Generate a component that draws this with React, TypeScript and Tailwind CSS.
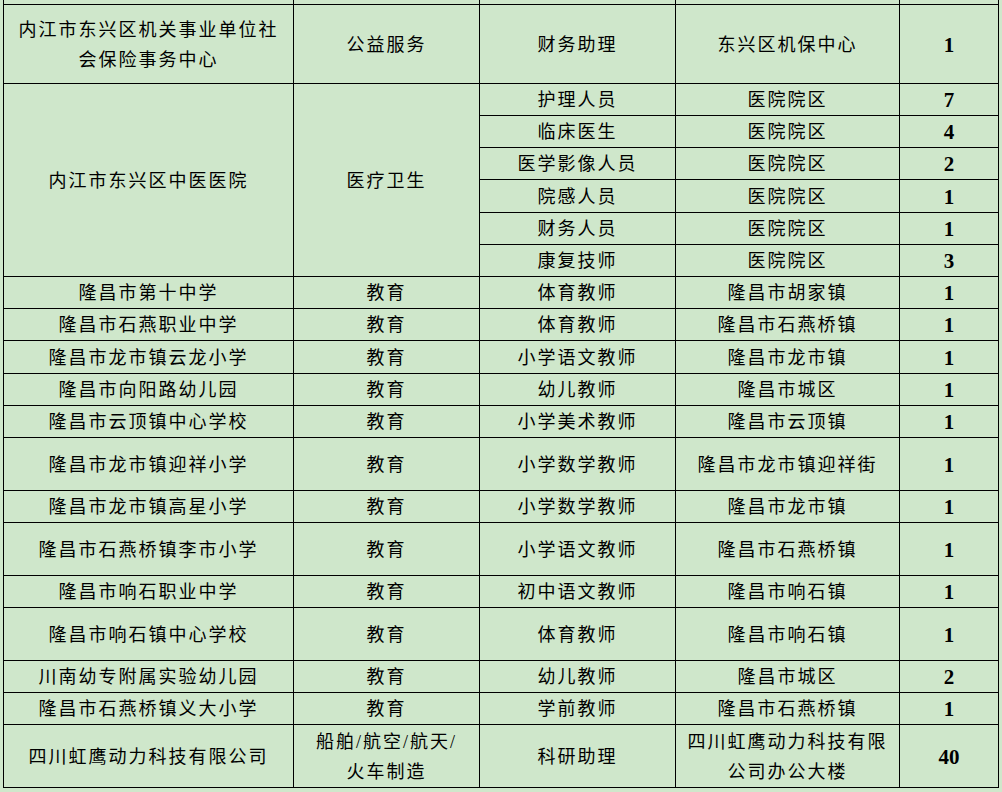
import React from "react";

type Row = {
  h: number;
  unit?: React.ReactNode;
  unitSpan?: number;
  field?: React.ReactNode;
  fieldSpan?: number;
  job: React.ReactNode;
  place: React.ReactNode;
  num: string;
};

const TwoLines = ({ a, b }: { a: string; b: string }) => (
  <span className="block leading-[30px]">
    {a}
    <br />
    {b}
  </span>
);

const rows: Row[] = [
  {
    h: 79,
    unit: <TwoLines a="内江市东兴区机关事业单位社" b="会保险事务中心" />,
    field: "公益服务",
    job: "财务助理",
    place: "东兴区机保中心",
    num: "1",
  },
  { h: 32, unit: "内江市东兴区中医医院", unitSpan: 6, field: "医疗卫生", fieldSpan: 6, job: "护理人员", place: "医院院区", num: "7" },
  { h: 32, job: "临床医生", place: "医院院区", num: "4" },
  { h: 32, job: "医学影像人员", place: "医院院区", num: "2" },
  { h: 33, job: "院感人员", place: "医院院区", num: "1" },
  { h: 32, job: "财务人员", place: "医院院区", num: "1" },
  { h: 32, job: "康复技师", place: "医院院区", num: "3" },
  { h: 32, unit: "隆昌市第十中学", field: "教育", job: "体育教师", place: "隆昌市胡家镇", num: "1" },
  { h: 32, unit: "隆昌市石燕职业中学", field: "教育", job: "体育教师", place: "隆昌市石燕桥镇", num: "1" },
  { h: 33, unit: "隆昌市龙市镇云龙小学", field: "教育", job: "小学语文教师", place: "隆昌市龙市镇", num: "1" },
  { h: 32, unit: "隆昌市向阳路幼儿园", field: "教育", job: "幼儿教师", place: "隆昌市城区", num: "1" },
  { h: 32, unit: "隆昌市云顶镇中心学校", field: "教育", job: "小学美术教师", place: "隆昌市云顶镇", num: "1" },
  { h: 53, unit: "隆昌市龙市镇迎祥小学", field: "教育", job: "小学数学教师", place: "隆昌市龙市镇迎祥街", num: "1" },
  { h: 32, unit: "隆昌市龙市镇高星小学", field: "教育", job: "小学数学教师", place: "隆昌市龙市镇", num: "1" },
  { h: 53, unit: "隆昌市石燕桥镇李市小学", field: "教育", job: "小学语文教师", place: "隆昌市石燕桥镇", num: "1" },
  { h: 32, unit: "隆昌市响石职业中学", field: "教育", job: "初中语文教师", place: "隆昌市响石镇", num: "1" },
  { h: 53, unit: "隆昌市响石镇中心学校", field: "教育", job: "体育教师", place: "隆昌市响石镇", num: "1" },
  { h: 32, unit: "川南幼专附属实验幼儿园", field: "教育", job: "幼儿教师", place: "隆昌市城区", num: "2" },
  { h: 32, unit: "隆昌市石燕桥镇义大小学", field: "教育", job: "学前教师", place: "隆昌市石燕桥镇", num: "1" },
  {
    h: 63,
    unit: "四川虹鹰动力科技有限公司",
    field: <TwoLines a="船舶/航空/航天/" b="火车制造" />,
    job: "科研助理",
    place: <TwoLines a="四川虹鹰动力科技有限" b="公司办公大楼" />,
    num: "40",
  },
];

const cell = "border border-black text-center align-middle p-0 pt-[2px] whitespace-nowrap leading-[26px] tracking-[2px]";

export default function App() {
  return (
    <div
      className="min-h-[792px] w-[1002px] bg-[#cfe7cb] text-[18px] text-black"
      style={{ fontFamily: '"Liberation Serif", "Noto Sans CJK SC", serif' }}
    >
      <table className="ml-[3px] table-fixed border-collapse">
        <colgroup>
          <col className="w-[290px]" />
          <col className="w-[186px]" />
          <col className="w-[196px]" />
          <col className="w-[224px]" />
          <col className="w-[99px]" />
        </colgroup>
        <tbody>
          <tr className="h-[4px]">
            <td className="border-x border-b border-black p-0" />
            <td className="border-x border-b border-black p-0" />
            <td className="border-x border-b border-black p-0" />
            <td className="border-x border-b border-black p-0" />
            <td className="border-x border-b border-black p-0" />
          </tr>
          {rows.map((r, i) => (
            <tr key={i} style={{ height: r.h }}>
              {r.unit !== undefined && (
                <td className={cell} rowSpan={r.unitSpan}>
                  {r.unit}
                </td>
              )}
              {r.field !== undefined && (
                <td className={cell} rowSpan={r.fieldSpan}>
                  {r.field}
                </td>
              )}
              <td className={cell}>{r.job}</td>
              <td className={cell}>{r.place}</td>
              <td className={`${cell} text-[21px] font-bold tracking-normal`}>{r.num}</td>
            </tr>
          ))}
        </tbody>
      </table>
    </div>
  );
}
